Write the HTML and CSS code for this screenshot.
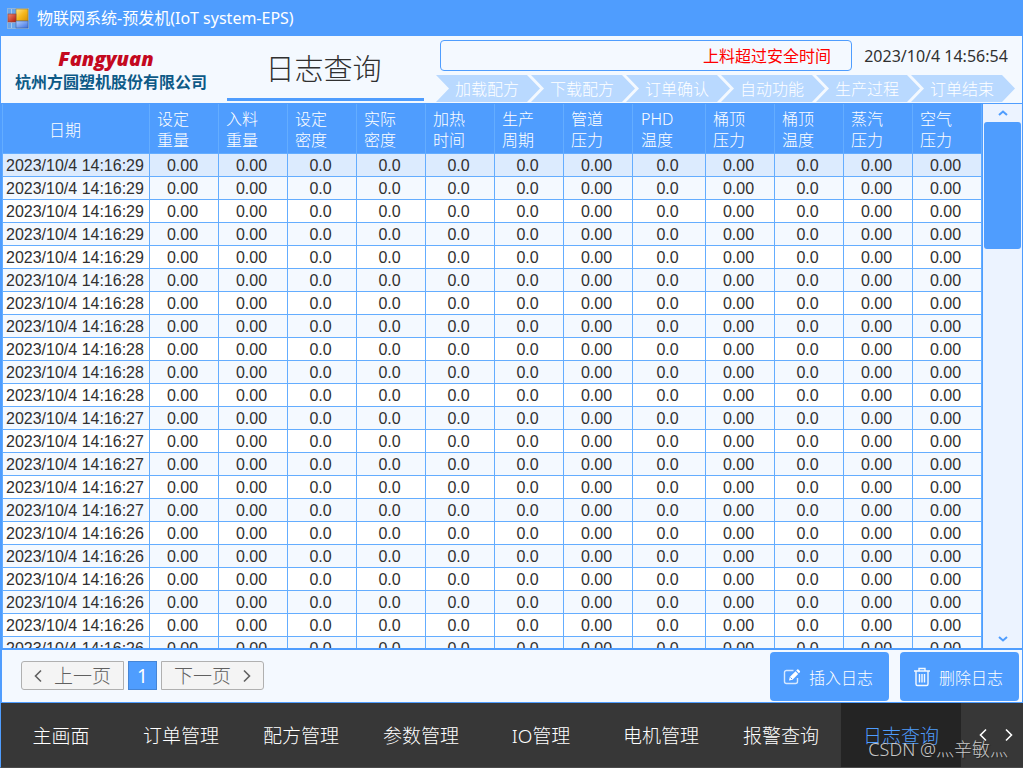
FILE: index.html
```html
<!DOCTYPE html>
<html lang="zh-CN">
<head>
<meta charset="utf-8">
<meta name="viewport" content="width=device-width, initial-scale=1">
<title>物联网系统-预发机(IoT system-EPS)</title>
<link rel="stylesheet" href="styles.css">
</head>
<body>
<div class="window">
  <header class="titlebar">
    <svg class="app-icon" viewBox="0 0 22 21" aria-hidden="true">
      <defs>
        <linearGradient id="gy" x1="0" y1="0" x2="1" y2="1"><stop offset="0" stop-color="#ffe58a"/><stop offset=".5" stop-color="#f5b81c"/><stop offset="1" stop-color="#d89000"/></linearGradient>
        <linearGradient id="gr" x1="0" y1="0" x2="1" y2="1"><stop offset="0" stop-color="#f08a70"/><stop offset="1" stop-color="#b01808"/></linearGradient>
        <linearGradient id="gb" x1="0" y1="0" x2="1" y2="1"><stop offset="0" stop-color="#b4d0ff"/><stop offset="1" stop-color="#3c70e0"/></linearGradient>
      </defs>
      <rect x=".5" y=".5" width="21" height="20" fill="#6ba6ea" stroke="#8fb5de"/>
      <path d="M4.500 1v19M1 14.500h8" stroke="#a4c8f0" fill="none"/>
      <rect x="9" y="1" width="12" height="12" fill="url(#gy)" stroke="#8a7a40" stroke-width=".6"/>
      <rect x="1" y="6" width="8" height="8" fill="url(#gr)" stroke="#8a4040" stroke-width=".6"/>
      <rect x="9" y="13" width="12" height="7" fill="url(#gb)" stroke="#40609a" stroke-width=".6"/>
    </svg>
    <span class="app-name">物联网系统-预发机(IoT system-EPS)</span>
  </header>

  <section class="banner">
    <div class="brand">
      <div class="brand-name">Fangyuan</div>
      <div class="brand-company">杭州方圆塑机股份有限公司</div>
    </div>
    <h1 class="page-title">日志查询</h1>
    <div class="status">
      <div class="status-top">
        <div class="alarm" role="status">上料超过安全时间</div>
        <time class="clock">2023/10/4 14:56:54</time>
      </div>
      <ol class="steps">
        <li>加载配方</li><li>下载配方</li><li>订单确认</li><li>自动功能</li><li>生产过程</li><li>订单结束</li>
      </ol>
    </div>
  </section>

  <main class="grid">
    <div class="grid-view">
      <table class="log">
        <colgroup><col class="col-date"><col><col><col><col><col><col><col><col class="col-phd"><col><col><col><col></colgroup>
        <thead>
          <tr><th class="date">日期</th><th>设定<br>重量</th><th>入料<br>重量</th><th>设定<br>密度</th><th>实际<br>密度</th><th>加热<br>时间</th><th>生产<br>周期</th><th>管道<br>压力</th><th class="phd">PHD<br>温度</th><th>桶顶<br>压力</th><th>桶顶<br>温度</th><th>蒸汽<br>压力</th><th>空气<br>压力</th></tr>
        </thead>
        <tbody id="rows"></tbody>
      </table>
    </div>
    <div class="scrollbar">
      <button type="button" class="scroll-btn" aria-label="向上滚动"><svg viewBox="0 0 10 6"><path d="M1 5l4-3.500L9 5"/></svg></button>
      <div class="scroll-track"><div class="scroll-thumb"></div></div>
      <button type="button" class="scroll-btn" aria-label="向下滚动"><svg viewBox="0 0 10 6"><path d="M1 1l4 3.500L9 1"/></svg></button>
    </div>
  </main>

  <section class="toolbar">
    <div class="pager">
      <button type="button" class="page-btn"><svg viewBox="0 0 8 14"><path d="M7 1.500L1.500 7 7 12.500"/></svg>上一页</button>
      <button type="button" class="page-num">1</button>
      <button type="button" class="page-btn page-next">下一页<svg viewBox="0 0 8 14"><path d="M1 1.500L6.500 7 1 12.500"/></svg></button>
    </div>
    <div class="actions">
      <button type="button" class="action"><svg viewBox="0 0 18 18"><path d="M10.500 2.500H3.500A2 2 0 0 0 1.500 4.500v9a2 2 0 0 0 2 2h9a2 2 0 0 0 2-2V10" fill="none" stroke="#d5e8ff" stroke-width="1.400"/><path d="M6 12.500l.8-3.500 5.700-5.800 2.700 2.700-5.700 5.800zM13.200 2.500l1-1q.6-.5 1.200 0l1.500 1.500q.5.600 0 1.200l-1 1z" fill="#fff"/><path d="M7.500 9.500l1.500 1.500" stroke="#4f9dfe"/></svg>插入日志</button>
      <button type="button" class="action"><svg viewBox="0 0 18 20"><path d="M1 4h16M6 4V1.500h6V4M3 4v13a1.500 1.500 0 0 0 1.500 1.500h9a1.500 1.500 0 0 0 1.500-1.500V4M6.500 7v8.500M9 7v8.500M11.500 7v8.500" fill="none" stroke="#f4f9ff" stroke-width="1.400"/></svg>删除日志</button>
    </div>
  </section>

  <nav class="nav">
    <div class="nav-items">
      <a href="#">主画面</a><a href="#">订单管理</a><a href="#">配方管理</a><a href="#">参数管理</a><a href="#">IO管理</a><a href="#">电机管理</a><a href="#">报警查询</a><a href="#" class="active" aria-current="page">日志查询</a>
    </div>
    <div class="nav-arrows">
      <button type="button" aria-label="上一组"><svg viewBox="0 0 8 14"><path d="M7 1.500L1.500 7 7 12.500"/></svg></button>
      <button type="button" aria-label="下一组"><svg viewBox="0 0 8 14"><path d="M1 1.500L6.500 7 1 12.500"/></svg></button>
    </div>
    <div class="watermark">CSDN @灬辛敏灬</div>
  </nav>
</div>
<script src="rows.js"></script>
</body>
</html>
```
FILE: rows.js
```js
const seconds = [[29, 5], [28, 6], [27, 5], [26, 6]];
const values = ["0.00", "0.00", "0.0", "0.0", "0.0", "0.0", "0.00", "0.0", "0.00", "0.0", "0.00", "0.00"];
const cells = values.map(v => `<td>${v}</td>`).join("");
document.getElementById("rows").innerHTML = seconds
  .map(([s, count]) => `<tr><td class="date">2023/10/4 14:16:${s}</td>${cells}</tr>`.repeat(count))
  .join("");
```
FILE: styles.css
```css
:root {
  --blue: #4f9dfe;
  --pale: #f4f9ff;
  --line: #64adff;
  --ui: "Noto Sans", "Noto Sans CJK SC", sans-serif;
}
* { box-sizing: border-box; }
body {
  margin: 0;
  font-family: var(--ui);
  font-size: 16px;
  font-weight: 300;
  color: #303030;
}
button { font: inherit; padding: 0; margin: 0; border: 0; cursor: pointer; }
svg { display: block; flex: none; }

.window {
  height: 100vh;
  display: flex;
  flex-direction: column;
  background: var(--pale);
  border-left: 1px solid var(--blue);
  border-bottom: 1px solid #4a4a4a;
}

.titlebar {
  flex: none;
  height: 36px;
  display: flex;
  align-items: center;
  gap: 8px;
  padding: 0 6px;
  background: var(--blue);
  color: #fff;
  font-weight: 400;
}
.app-icon { width: 22px; height: 21px; }
.app-name { line-height: 36px; }

.banner {
  flex: none;
  height: 67px;
  display: flex;
  border-right: 1px solid var(--blue);
}
.brand {
  width: 226px;
  padding: 10px 0 0 14px;
  white-space: nowrap;
}
.brand-name {
  width: 182px;
  text-align: center;
  font: italic 800 20px/26px "Open Sans", sans-serif;
  color: #c4091f;
}
.brand-company {
  font: 700 16px/18px "Noto Sans CJK SC", sans-serif;
  color: #0d5a87;
}
.page-title {
  width: 197px;
  height: 65px;
  margin: 0;
  padding-right: 4px;
  border-bottom: 3px solid var(--blue);
  text-align: center;
  font-size: 29px;
  font-weight: 300;
  line-height: 66px;
}
.status {
  flex: 1;
  padding: 4px 7px 0 12px;
}
.status-top { display: flex; height: 31px; padding-left: 4px; }
.alarm {
  flex: 1;
  border: 1px solid var(--blue);
  border-radius: 4px;
  padding-right: 20px;
  text-align: right;
  font-weight: 400;
  line-height: 30px;
  color: #f00;
}
.clock { width: 163px; padding-left: 5px; text-align: center; font-weight: 400; line-height: 32px; }
.steps {
  display: flex;
  list-style: none;
  margin: 4px 0 0;
  padding: 0;
}
.steps li {
  flex: 1;
  height: 27px;
  padding-right: 2px;
  line-height: 28px;
  text-align: center;
  color: #fff;
  background: #b9d9ff;
  clip-path: polygon(0 0, calc(100% - 13px) 0, 100% 50%, calc(100% - 13px) 100%, 0 100%, 13px 50%);
}
.steps li + li { margin-left: -9px; }

.grid {
  flex: 1;
  min-height: 0;
  display: flex;
  border: solid var(--blue);
  border-width: 1px 1px 2px;
}
.grid-view {
  flex: 1;
  overflow: hidden;
  border-left: 1px solid var(--line);
  border-right: 1px solid var(--blue);
}
.log {
  width: 100%;
  table-layout: fixed;
  border-collapse: separate;
  border-spacing: 0;
}
.col-date { width: 147px; }
.col-phd { width: 73px; }
.log th {
  height: 50px;
  padding: 3px 0 0 7px;
  border-right: 1px solid var(--line);
  border-bottom: 1px solid var(--line);
  background: var(--blue);
  color: #fff;
  font-weight: 300;
  line-height: 21px;
  text-align: left;
}
.log th.date { padding: 3px 22px 0 0; text-align: center; }
.log th.phd { padding-left: 8px; }
.log td {
  height: 23px;
  padding: 1px 3px 0 0;
  border-right: 1px solid var(--line);
  border-bottom: 1px solid var(--line);
  font: 16px/21px "Liberation Sans", Arial, sans-serif;
  text-align: center;
}
.log td.date {
  padding: 1px 0 0 3px;
  text-align: left;
  white-space: nowrap;
}
.log tbody tr { background: #fff; }
.log tbody tr:nth-child(even) { background: var(--pale); }
.log tbody tr:first-child { background: #dcebfe; }

.scrollbar {
  width: 39px;
  display: flex;
  flex-direction: column;
  background: #ecf3ff;
}
.scroll-btn {
  height: 18px;
  display: grid;
  place-items: center;
  background: none;
}
.scroll-btn svg { width: 10px; height: 6px; fill: none; stroke: var(--blue); stroke-width: 2; }
.scroll-track { flex: 1; padding: 0 1px; }
.scroll-thumb { height: 25%; border-radius: 3px; background: var(--blue); }

.toolbar {
  flex: none;
  height: 53px;
  display: flex;
  justify-content: space-between;
  border: solid var(--blue);
  border-width: 0 1px 1px;
}
.pager { display: flex; gap: 4px; padding: 11px 0 0 19px; }
.page-btn, .page-num {
  height: 29px;
  border: 1px solid #b0b0b0;
  background: #f4f4f4;
  color: #606060;
  font-size: 19px;
  font-weight: 300;
  line-height: 28px;
}
.page-btn {
  width: 103px;
  display: flex;
  align-items: center;
  justify-content: center;
  gap: 12px;
  border-radius: 3px 0 0 3px;
}
.page-next { border-radius: 0 3px 3px 0; }
.page-btn svg { width: 8px; height: 14px; fill: none; stroke: #606060; stroke-width: 1.6; }
.page-num { width: 29px; background: var(--blue); border-color: #4585d6; color: #fff; font-weight: 400; }

.actions { display: flex; gap: 11px; padding: 2px 3px 1px 0; }
.action {
  width: 119px;
  display: flex;
  align-items: center;
  justify-content: center;
  gap: 8px;
  padding-right: 3px;
  border-radius: 4px;
  background: var(--blue);
  color: #fff;
}
.action svg { width: 18px; height: 20px; }

.nav {
  flex: none;
  position: relative;
  height: 64px;
  display: flex;
  background: #373737;
}
.nav-items { flex: 1; display: grid; grid-template-columns: repeat(8, 1fr); }
.nav-items a {
  color: #fff;
  font-size: 19px;
  line-height: 66px;
  height: 64px;
  text-align: center;
  text-decoration: none;
}
.nav-items .active { background: #242424; color: var(--blue); }
.nav-arrows { width: 62px; display: flex; padding-left: 9px; }
.nav-arrows button { width: 26px; display: grid; place-items: center; background: none; }
.nav-arrows svg { width: 8px; height: 14px; fill: none; stroke: #fff; stroke-width: 1.6; }
.watermark {
  position: absolute;
  right: 15px;
  bottom: 6px;
  font-size: 18px;
  font-weight: 300;
  line-height: 24px;
  color: #c8c8c8;
  text-shadow: 1px 1px 1px #222;
  pointer-events: none;
}
```
